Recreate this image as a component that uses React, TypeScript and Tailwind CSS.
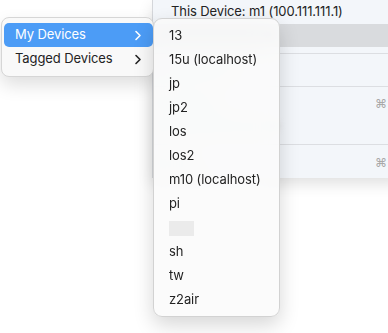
import React from "react";

const font = { fontFamily: "Inter, 'Noto Sans', 'Liberation Sans', sans-serif" };

function Chevron({ className }: { className?: string }) {
  return (
    <svg width="8" height="11" viewBox="0 0 8 11" className={className}>
      <path d="M2 1.5 L6 5.5 L2 9.5" fill="none" stroke="currentColor" strokeWidth="1.6" strokeLinecap="round" strokeLinejoin="round" />
    </svg>
  );
}

function Smudge({ w, dark }: { w: number; dark?: boolean }) {
  return (
    <div
      className={dark ? "h-[9px] rounded-full bg-[#8a8b8d] blur-[3px] opacity-70" : "h-[8px] rounded-full bg-[#c9cacc] blur-[3px] opacity-60"}
      style={{ width: w }}
    />
  );
}

const devices = ["13", "15u (localhost)", "jp", "jp2", "los", "los2", "m10 (localhost)", "pi", "", "sh", "tw", "z2air"];

export default function App() {
  return (
    <div className="relative w-[388px] h-[333px] overflow-hidden bg-white text-[13px] tracking-[-0.1px] text-[#232323]" style={font}>
      {/* background menu */}
      <div className="absolute left-[152px] top-0 w-[250px] h-[178px] bg-[#f3f6fa] border-l border-[#d4d6da] shadow-[0_6px_14px_rgba(0,0,0,0.12)] flex flex-col">
        <div className="h-[24px] flex items-center pl-[18px]">This Device: m1 (100.111.111.1)</div>
        <div className="h-[23px] flex items-center pl-[10px] bg-[#d9dbde]">
          <Smudge w={110} dark />
        </div>
        <div className="h-[12px] flex items-center"><div className="w-full h-px bg-[#dcdee2]" /></div>
        <div className="h-[22px] flex items-center pl-[6px]"><Smudge w={80} /></div>
        <div className="h-[10px] flex items-center"><div className="w-full h-px bg-[#dcdee2]" /></div>
        <div className="h-[24px] flex items-center pl-[6px]"><Smudge w={60} /></div>
        <div className="h-[22px] flex items-center pl-[6px]"><Smudge w={120} /></div>
        <div className="h-[14px] flex items-center"><div className="w-full h-px bg-[#dcdee2]" /></div>
        <div className="h-[26px] flex items-center pl-[6px]"><Smudge w={40} /></div>
        <div className="absolute left-[222px] top-[95px] text-[#a8a8a8] text-[12px]">⌘</div>
        <div className="absolute left-[222px] top-[154px] text-[#a8a8a8] text-[12px]">⌘</div>
      </div>

      {/* left menu */}
      <div className="absolute left-[1px] top-[17px] w-[153px] h-[60px] bg-[#f9f9f9] rounded-[8px] border border-[#d6d6d6] shadow-[0_8px_18px_rgba(0,0,0,0.13)] pt-[5px] pl-[2px] flex flex-col">
        <div className="h-[24px] rounded-[5px] bg-[#4c9cf6] text-white flex items-center justify-between pl-[11px] pr-[11px]">
          <span>My Devices</span>
          <Chevron />
        </div>
        <div className="h-[24px] flex items-center justify-between pl-[11px] pr-[11px]">
          <span>Tagged Devices</span>
          <Chevron />
        </div>
      </div>

      {/* submenu */}
      <div className="absolute left-[153px] top-[18px] w-[127px] h-[299px] bg-[#fbfbfb]/90 backdrop-blur-md rounded-[9px] border border-[#d2d2d2] shadow-[0_8px_20px_rgba(0,0,0,0.16)] pt-[5px] flex flex-col">
        {devices.map((d, i) => (
          <div key={i} className="h-[24px] flex items-center pl-[15px] shrink-0">
            {d ? <span>{d}</span> : <div className="w-[25px] h-[15px] bg-[#ebebeb]" />}
          </div>
        ))}
      </div>
    </div>
  );
}
